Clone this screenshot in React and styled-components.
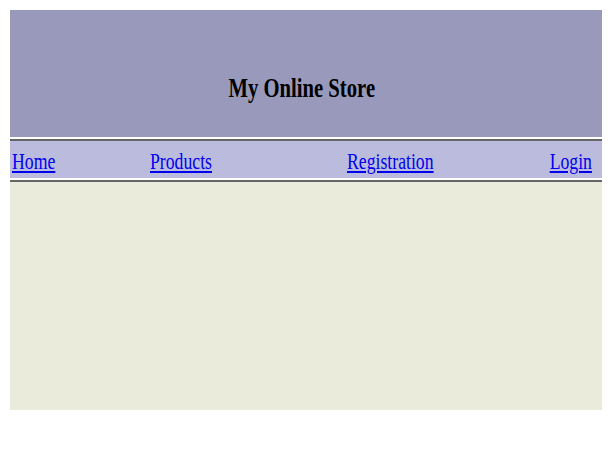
import React from "react";
import styled, { createGlobalStyle } from "styled-components";

const Global = createGlobalStyle`
  html, body { margin: 0; padding: 0; background: #ffffff; }
  body { font-family: "Liberation Serif", "Times New Roman", serif; }
`;

const Page = styled.div`
  padding: 10px;
  width: 592px;
`;

const Header = styled.header`
  height: 127px;
  box-sizing: border-box;
  padding: 63px 9px 0 0;
  background: #9999bb;
  text-align: center;
`;

const Title = styled.h1`
  margin: 0;
  display: inline-block;
  font-family: "Liberation Serif", "Times New Roman", serif;
  font-weight: bold;
  font-size: 27px;
  line-height: 31px;
  color: #000;
  transform: scaleX(0.766);
  transform-origin: center;
`;

const Rule = styled.div`
  margin-top: 2px;
  height: 2px;
  background: #666666;
`;

const Nav = styled.nav`
  height: 37px;
  box-sizing: border-box;
  padding: 1px 10px 0 2px;
  background: #bbbbdd;
  display: grid;
  grid-template-columns: 138px 197px 1fr auto;
  align-items: center;
`;

const NavLink = styled.a`
  justify-self: ${(p) => (p.$right ? "end" : "start")};
  display: inline-block;
  font-family: "Liberation Serif", "Times New Roman", serif;
  font-size: 23px;
  line-height: 36px;
  padding-top: 2px;
  color: #0000ee;
  text-decoration: underline;
  transform: scaleX(0.77);
  transform-origin: ${(p) => (p.$right ? "right" : "left")} center;
`;

const Content = styled.main`
  height: 228px;
  background: #ebebdc;
`;

export default function App() {
  return (
    <>
      <Global />
      <Page>
        <Header>
          <Title>My Online Store</Title>
        </Header>
        <Rule />
        <Nav>
          <NavLink href="#">Home</NavLink>
          <NavLink href="#">Products</NavLink>
          <NavLink href="#">Registration</NavLink>
          <NavLink href="#" $right>Login</NavLink>
        </Nav>
        <Rule />
        <Content />
      </Page>
    </>
  );
}
